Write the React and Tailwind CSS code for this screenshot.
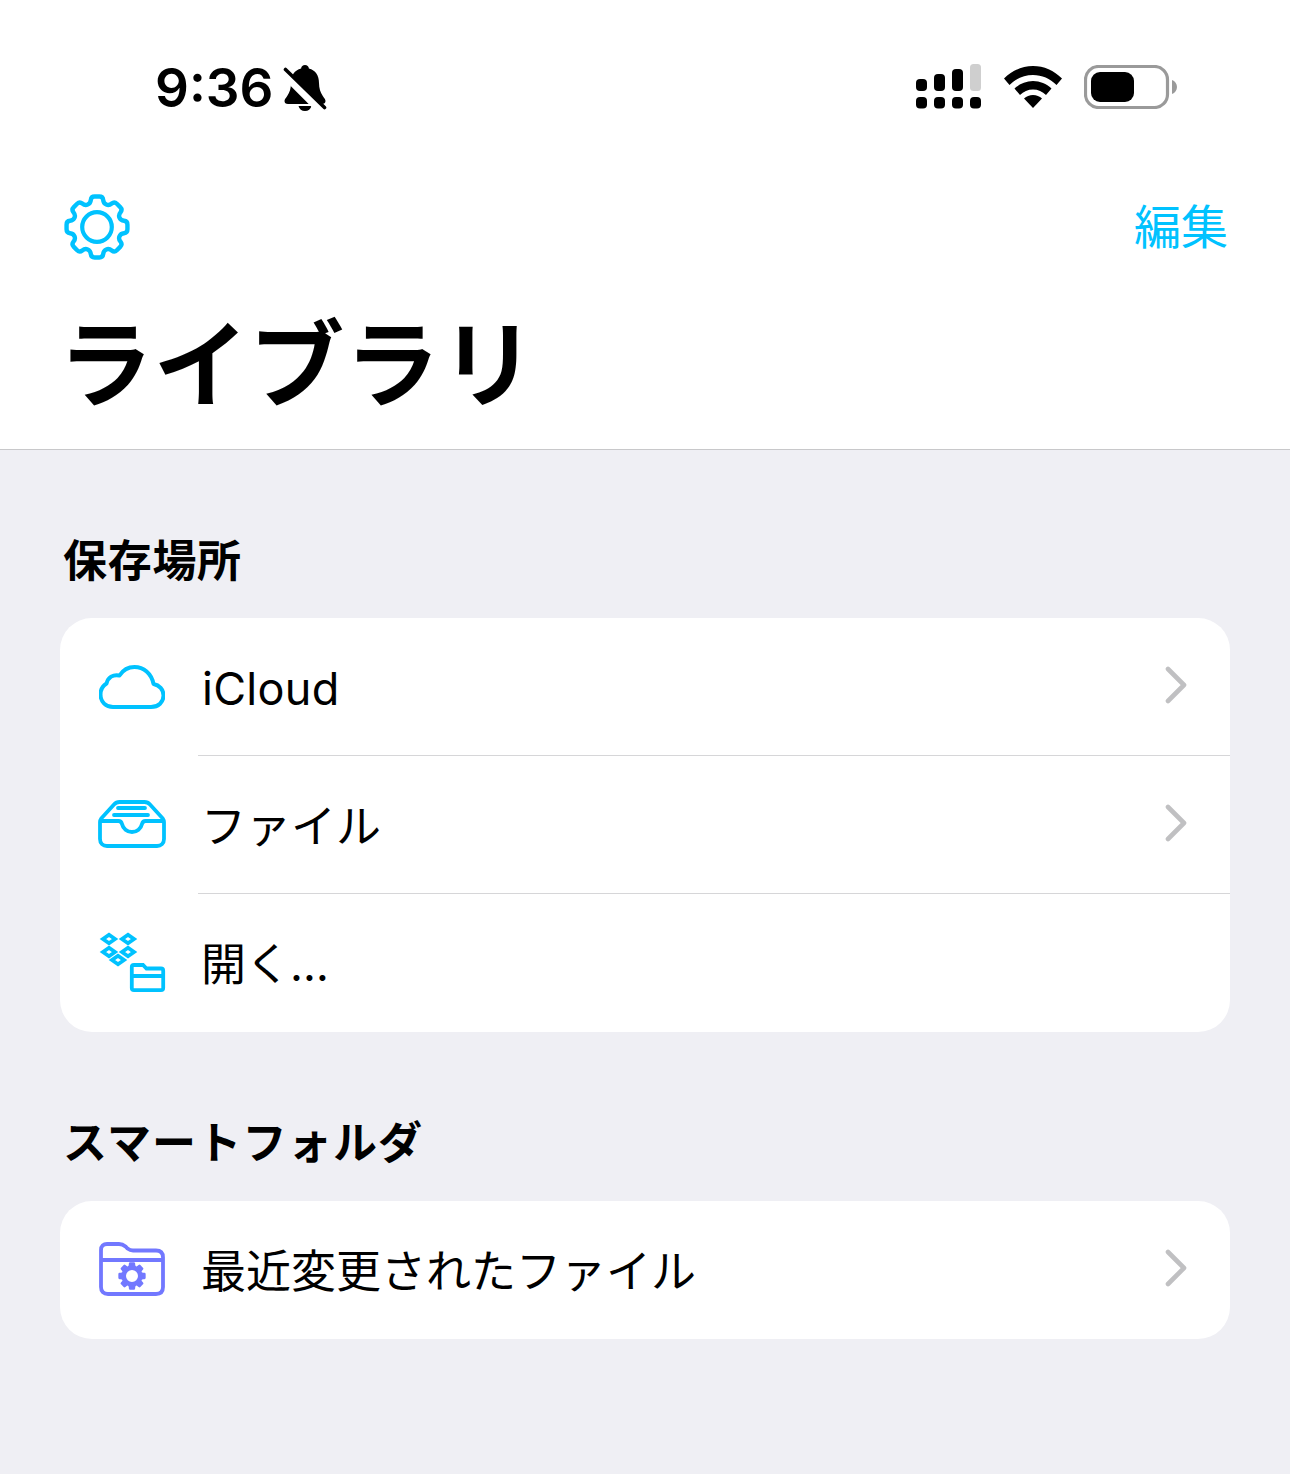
const CJK = "font-['Inter','Noto_Sans_CJK_JP','Noto_Sans_CJK_SC',sans-serif]";

function polar(cx, cy, ang, rad) {
  return [cx + Math.cos(ang) * rad, cy + Math.sin(ang) * rad];
}

function gearPoints(cx, cy, R, r, w1, w2, n = 8) {
  const out = [];
  for (let i = 0; i < n; i++) {
    const a = (i / n) * Math.PI * 2 - Math.PI / 2;
    out.push(polar(cx, cy, a - w1, r), polar(cx, cy, a - w2, R), polar(cx, cy, a + w2, R), polar(cx, cy, a + w1, r));
  }
  return out;
}

function roundedPath(points, corner) {
  const len = points.length;
  let d = "";
  points.forEach((p, i) => {
    const prev = points[(i - 1 + len) % len];
    const next = points[(i + 1) % len];
    const toward = (q) => {
      const dx = q[0] - p[0];
      const dy = q[1] - p[1];
      const l = Math.hypot(dx, dy);
      const k = Math.min(corner, l / 2) / l;
      return [p[0] + dx * k, p[1] + dy * k];
    };
    const a = toward(prev);
    const b = toward(next);
    d += `${i === 0 ? "M" : "L"}${a[0].toFixed(2)} ${a[1].toFixed(2)} Q${p[0].toFixed(2)} ${p[1].toFixed(2)} ${b[0].toFixed(2)} ${b[1].toFixed(2)} `;
  });
  return d + "Z";
}

function Bell() {
  return (
    <svg width="44" height="46" viewBox="0 0 44 46" className="ml-[10px] mt-[2px]">
      <path d="M22 0c-2.200 0-3.700 1.500-3.900 3.500C11.500 5.200 8 10.500 8 18c0 5.500-1.500 9.500-3.500 12.500C3 33 1.500 34 1.500 36c0 1.800 1.300 3 3.500 3h34c2.200 0 3.500-1.200 3.500-3 0-2-1.500-3-3-5.500C37.500 27.500 36 23.500 36 18c0-7.500-3.500-12.800-10.100-14.500C25.700 1.500 24.200 0 22 0zM15.500 41c.7 3 3.300 5 6.500 5s5.800-2 6.500-5z" fill="#000" />
      <path d="M-1 6l40 40" stroke="#fff" strokeWidth="9" />
      <path d="M2.500 4.500l39 38" stroke="#000" strokeWidth="3.600" strokeLinecap="round" />
    </svg>
  );
}

function Signal() {
  return (
    <svg width="66" height="46" viewBox="0 0 66 46">
      <rect x="1" y="15" width="11" height="12" rx="4" fill="#000" />
      <rect x="19" y="10" width="11" height="17" rx="4" fill="#000" />
      <rect x="37" y="5" width="11" height="22" rx="4" fill="#000" />
      <rect x="55" y="0" width="11" height="27" rx="3.500" fill="#cfcfcf" />
      <rect x="1" y="33" width="11" height="11.500" rx="4" fill="#000" />
      <rect x="19" y="33" width="11" height="11.500" rx="4" fill="#000" />
      <rect x="37" y="33" width="11" height="11.500" rx="4" fill="#000" />
      <rect x="55" y="33" width="11" height="11.500" rx="4" fill="#000" />
    </svg>
  );
}

function Wifi() {
  return (
    <svg width="58" height="42" viewBox="0 0 58 42">
      <path d="M29 0C18 0 8 4.500 0 12.500l5.500 6.500C12 12.500 20 9 29 9s17 3.500 23.500 10l5.500-6.500C50 4.500 40 0 29 0z" fill="#000" />
      <path d="M29 15c-7 0-13.500 2.800-18.500 7.500L16 29c3.500-3.500 8-5.500 13-5.500s9.500 2 13 5.500l5.500-6.500C42.500 17.800 36 15 29 15z" fill="#000" />
      <path d="M29 29c-3.500 0-6.500 1.300-9 3.500L29 42l9-9.500c-2.500-2.200-5.500-3.500-9-3.500z" fill="#000" />
    </svg>
  );
}

function Battery() {
  return (
    <svg width="94" height="44" viewBox="0 0 94 44">
      <rect x="1.500" y="1.500" width="82" height="41" rx="13" fill="none" stroke="#9a9a9a" strokeWidth="3.200" />
      <rect x="7" y="7" width="43" height="30" rx="9" fill="#000" />
      <path d="M88 15c3 1 5 4 5 7s-2 6-5 7z" fill="#9a9a9a" />
    </svg>
  );
}

function Gear() {
  const color = "#00c2ff";
  return (
    <svg width="66" height="66" viewBox="0 0 66 66" fill="none">
      <path d={roundedPath(gearPoints(33, 33, 31, 24.500, 0.27, 0.19), 3.500)} stroke={color} strokeWidth="4.400" strokeLinejoin="round" />
      <circle cx="33" cy="33" r="14.800" stroke={color} strokeWidth="4.200" />
    </svg>
  );
}

function Cloud() {
  return (
    <svg width="66" height="44" viewBox="0 0 66 44" fill="none">
      <path d="M14 42h38c7.500 0 12.500-5 12.500-11.500 0-6-4.200-10.500-10-11.500C52.500 8.500 44.500 2 35.500 2 29 2 24 5 20.500 10.500c-6.500-1.500-11.500 2-13 8C3.500 21 1.500 25 1.500 29.500 1.500 37 7 42 14 42z" stroke="#00c2ff" strokeWidth="4" strokeLinejoin="round" />
    </svg>
  );
}

function Tray() {
  return (
    <svg width="68" height="48" viewBox="0 0 68 48" fill="none" stroke="#00c2ff" strokeWidth="3.800" className="mt-[-2px]">
      <path d="M9 46h50c4 0 7-2.500 7-7V22c0-1.500-.5-2.500-1.200-3.500L52 4.500C50.500 2.800 49 2 46.500 2h-25C19 2 17.500 2.800 16 4.500L3.200 18.500C2.500 19.500 2 20.500 2 22v17c0 4.500 3 7 7 7z" strokeLinejoin="round" />
      <path d="M2 21h18.500c2 0 3 1 3.500 3 1 4.500 5 8 10 8s9-3.500 10-8c.5-2 1.500-3 3.500-3H66" />
      <path d="M20 8h27M16 15h34" strokeLinecap="round" />
    </svg>
  );
}

function DropFolder() {
  const dia = (x, y) => (
    <path key={`${x}-${y}`} d={`M${x} ${y - 4.200}l6 4.200-6 4.200-6-4.200z`} fill="none" stroke="#00c2ff" strokeWidth="3.800" strokeLinejoin="miter" />
  );
  return (
    <svg width="68" height="62" viewBox="0 0 68 62" fill="none">
      {dia(11, 7)}
      {dia(30, 7)}
      {dia(11, 20)}
      {dia(30, 20)}
      {dia(20, 28)}
      <path d="M36 33h9l3.500 3.500H63c1.500 0 2.200.8 2.200 2.200V56c0 1.500-.8 2.200-2.200 2.200H36c-1.500 0-2.200-.7-2.200-2.200V35c0-1.300.7-2 2.200-2zM33.800 44h31.400" stroke="#00c2ff" strokeWidth="3.800" />
    </svg>
  );
}

function SmartFolder() {
  const color = "#7278ff";
  return (
    <svg width="66" height="54" viewBox="0 0 66 54" fill="none" className="mt-[-2px]">
      <path d="M8 2h12c3 0 4.500.8 6.500 2.500l2 2C30.500 8 32 8.500 34 8.500h23c4.500 0 7 2.500 7 7V45c0 4.500-2.500 7-7 7H9c-4.500 0-7-2.500-7-7V8c0-4 2.500-6 6-6zM2 18h62" stroke={color} strokeWidth="3.800" />
      <path
        fillRule="evenodd"
        fill={color}
        d={`${roundedPath(gearPoints(33, 34, 14, 10.500, 0.32, 0.22), 1.200)} M39 34a6 6 0 1 0-12 0a6 6 0 1 0 12 0z`}
      />
    </svg>
  );
}

function Chevron() {
  return (
    <svg width="22" height="38" viewBox="0 0 22 38" fill="none" className="mr-[43px] mt-[-4px]">
      <path d="M3 3l16 16L3 35" stroke="#c0c0c2" strokeWidth="4.600" strokeLinecap="round" strokeLinejoin="round" />
    </svg>
  );
}

function Row({ icon, label, chevron = true, divider = false, labelClass = "" }) {
  return (
    <div className="relative flex h-[138px] items-center">
      <div className="flex w-[142px] shrink-0 items-center justify-center pl-[2px]">{icon}</div>
      <div className={`ml-[-1px] flex-1 pt-[2px] text-[45px] leading-none text-black ${labelClass}`}>{label}</div>
      {chevron && <Chevron />}
      {divider && <div className="absolute bottom-0 left-[138px] right-0 h-px bg-[#d6d6d8]" />}
    </div>
  );
}

function SectionTitle({ children, className = "" }) {
  return <div className={`pl-[63px] text-[44px] font-bold leading-none text-black ${className}`}>{children}</div>;
}

export default function App() {
  return (
    <div className={`flex h-[1474px] w-[1290px] flex-col overflow-hidden bg-[#efeff4] ${CJK}`}>
      <header className="h-[450px] border-b border-[#c8c8ca] bg-white">
        <div className="flex h-[174px] items-center pl-[155px] pr-[112px]">
          <span className="mt-[2px] text-[53px] font-semibold leading-none text-black">9:36</span>
          <Bell />
          <div className="flex-1" />
          <Signal />
          <div className="ml-[23px]"><Wifi /></div>
          <div className="ml-[22px]"><Battery /></div>
        </div>
        <div className="flex h-[106px] items-start justify-between pl-[64px] pr-[62px] pt-[20px]">
          <Gear />
          <span className="text-[47px] leading-[66px] text-[#00c2ff]">編集</span>
        </div>
        <div className="pl-[58px] pt-[36px] text-[95px] font-bold leading-[100px] tracking-[0.6px] text-black">ライブラリ</div>
      </header>
      <SectionTitle className="mt-[89px] tracking-[0.7px]">保存場所</SectionTitle>
      <section className="mx-[60px] mt-[35px] overflow-hidden rounded-[32px] bg-white">
        <Row icon={<Cloud />} label={<span className="ml-[1px]">iCloud</span>} divider labelClass="tracking-[0.3px]" />
        <Row icon={<Tray />} label="ファイル" divider />
        <Row icon={<DropFolder />} label="開く…" chevron={false} labelClass="tracking-[-0.5px]" />
      </section>
      <SectionTitle className="mt-[89px] tracking-[1.2px]">スマートフォルダ</SectionTitle>
      <section className="mx-[60px] mt-[36px] overflow-hidden rounded-[32px] bg-white">
        <Row icon={<SmartFolder />} label="最近変更されたファイル" />
      </section>
    </div>
  );
}
